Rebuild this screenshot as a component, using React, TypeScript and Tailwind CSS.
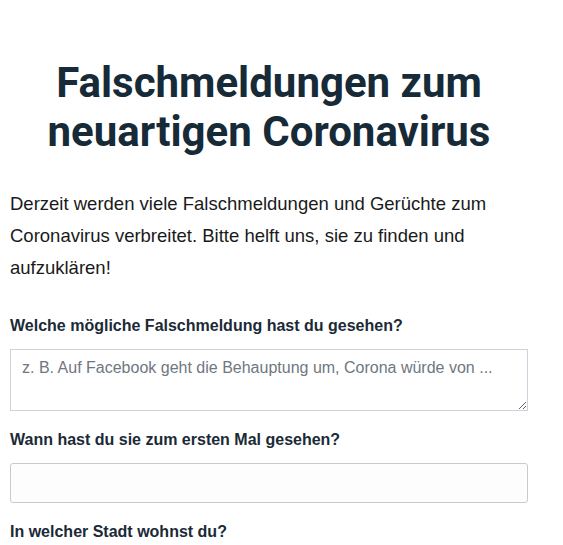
import React from 'react';

const App: React.FC = () => {
  return (
    <div className="min-h-screen bg-white">
      <div className="ml-[10px] w-[518px] pt-[58px]">
        {/* Title */}
        <h1 className="text-center font-['Roboto',sans-serif] text-[42px] font-bold leading-[49px] text-[#172a38]">
          Falschmeldungen zum neuartigen Coronavirus
        </h1>

        {/* Intro */}
        <p className="mt-[32px] font-['Liberation_Sans',Arial,sans-serif] text-[18.5px] leading-[32px] text-[#1a1a1a]">
          Derzeit werden viele Falschmeldungen und Gerüchte zum Coronavirus verbreitet. Bitte helft uns, sie zu finden und aufzuklären!
        </p>

        {/* Form */}
        <form className="mt-[32px] font-['Liberation_Sans',Arial,sans-serif]">
          <label className="block text-[16px] font-bold leading-[20px] text-[#1b2a37]">
            Welche mögliche Falschmeldung hast du gesehen?
          </label>
          <textarea
            rows={2}
            placeholder="z. B. Auf Facebook geht die Behauptung um, Corona würde von ..."
            className="mt-[13px] block h-[62px] w-full border border-[#cdd3da] bg-white px-[11px] py-[6px] text-[16px] leading-[24px] text-[#333] placeholder:text-[#6f7780] outline-none"
          />

          <label className="mt-[19px] block text-[16px] font-bold leading-[20px] text-[#1b2a37]">
            Wann hast du sie zum ersten Mal gesehen?
          </label>
          <input
            type="text"
            className="mt-[13px] block h-[40px] w-full rounded-[3px] border border-[#cacaca] bg-[#fdfdfd] px-[11px] text-[16px] outline-none"
          />

          <label className="mt-[19px] block text-[16px] font-bold leading-[20px] text-[#1b2a37]">
            In welcher Stadt wohnst du?
          </label>
          <input
            type="text"
            className="mt-[13px] block h-[40px] w-full rounded-[3px] border border-[#cacaca] bg-[#fdfdfd] px-[11px] text-[16px] outline-none"
          />
        </form>
      </div>
    </div>
  );
};

export default App;
